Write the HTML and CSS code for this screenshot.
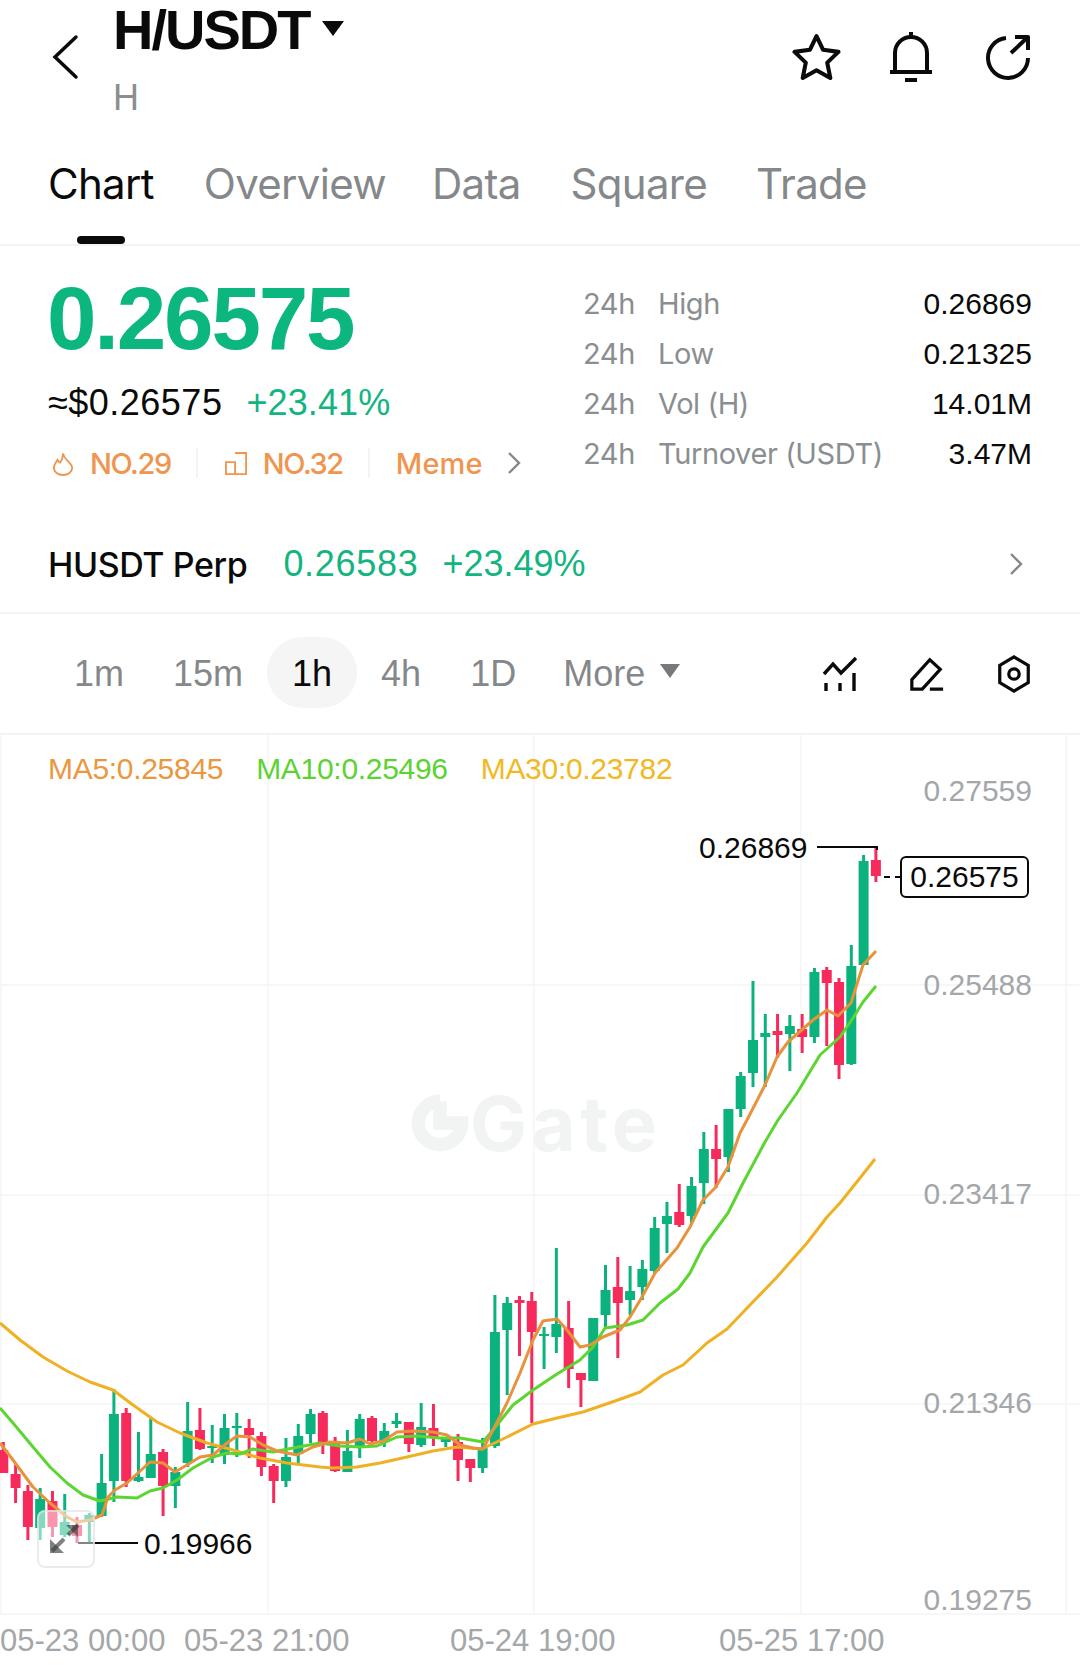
FILE: index.html
```html
<!DOCTYPE html>
<html>
	<head>
		<meta charset="utf-8">
		<title>H/USDT</title>
		<link rel="stylesheet" href="styles.css">
	</head>
	<body>
		<header class="topbar">
			<svg class="back" viewBox="0 0 28 46"><path d="M25 3 L4 23 L25 43"/></svg>
			<div class="pair">
				<h1 class="pair-name">H/USDT<span class="caret"></span></h1>
				<div class="pair-sub">H</div>
			</div>
			<div class="top-icons">
				<svg class="icon star" viewBox="0 0 48 48"><path d="M24 3 L30.5 16.5 L45.5 18.5 L34.5 29 L37.5 44 L24 36.5 L10.5 44 L13.5 29 L2.5 18.5 L17.5 16.5 Z"/></svg>
				<svg class="icon bell" viewBox="0 0 44 52"><path d="M22 1 V6 M6 41 V22 a16 16 0 0 1 32 0 V41 M1 41 H43 M16 49 H28"/></svg>
				<svg class="icon share" viewBox="0 0 46 46"><path d="M21 4 A20 20 0 1 0 43 24 M26 19 L43 3 M30 3 H43 V16"/></svg>
			</div>
		</header>

		<nav class="tabs">
			<a class="tab tab-active">Chart</a>
			<a class="tab tab-overview">Overview</a>
			<a class="tab tab-data">Data</a>
			<a class="tab">Square</a>
			<a class="tab">Trade</a>
		</nav>

		<section class="summary">
			<div class="quote">
				<div class="last-price">0.26575</div>
				<div class="quote-line">
					<span class="fiat">≈$0.26575</span>
					<span class="change">+23.41%</span>
				</div>
				<div class="tags">
					<svg class="tag-icon" viewBox="0 0 24 26"><path d="M12 2 C13 7 15 8 18 11 C21 14 22 16 22 18 A10 7.5 0 0 1 2 18 C2 14 4 12 6 9 C7 11 8 12 9 12 C11 9 12 6 12 2 Z"/></svg>
					<span class="tag">NO.29</span>
					<i class="tag-sep"></i>
					<svg class="tag-icon" viewBox="0 0 24 25"><path d="M1 11 H11 V24 H1 Z M11 1 H23 V24 H11"/></svg>
					<span class="tag">NO.32</span>
					<i class="tag-sep"></i>
					<span class="tag tag-meme">Meme</span>
					<svg class="chev tag-chev" viewBox="0 0 14 24"><path d="M2 2 L12 12 L2 22"/></svg>
				</div>
			</div>
			<div class="stats">
				<div class="stat"><span class="stat-period">24h</span><span class="stat-name">High</span><span class="stat-value">0.26869</span></div>
				<div class="stat"><span class="stat-period">24h</span><span class="stat-name">Low</span><span class="stat-value">0.21325</span></div>
				<div class="stat"><span class="stat-period">24h</span><span class="stat-name">Vol (H)</span><span class="stat-value">14.01M</span></div>
				<div class="stat"><span class="stat-period">24h</span><span class="stat-name">Turnover (USDT)</span><span class="stat-value">3.47M</span></div>
			</div>
		</section>

		<section class="perp">
			<span class="perp-name">HUSDT Perp</span>
			<span class="perp-price">0.26583</span>
			<span class="perp-change">+23.49%</span>
			<svg class="chev perp-chev" viewBox="0 0 14 24"><path d="M2 2 L12 12 L2 22"/></svg>
		</section>

		<section class="toolbar">
			<a class="range">1m</a>
			<a class="range">15m</a>
			<a class="range range-active">1h</a>
			<a class="range">4h</a>
			<a class="range">1D</a>
			<a class="range range-more">More<span class="caret caret-grey"></span></a>
			<div class="tools">
				<svg class="tool" viewBox="0 0 36 36"><path d="M2 18 L11 8 L19 17 L34 2 M4 27 V35 M18 27 V35 M32 17 V35"/></svg>
				<svg class="tool" viewBox="0 0 38 38"><path d="M3 35 V25 L22 4 L33 14 L14 35 Z M22 35 H36"/></svg>
				<svg class="tool" viewBox="0 0 36 40"><path d="M18 2 L33 11 V29 L18 38 L3 29 V11 Z"/><circle cx="18" cy="20" r="5.5"/></svg>
			</div>
		</section>

		<section class="chart">
			<div class="watermark">
				<svg class="watermark-logo" viewBox="0 0 58 56"><path d="M29 7 A21 21 0 1 0 50 28 H29 V7" /></svg>
				<span class="watermark-text">Gate</span>
			</div>
			<svg id="plot" class="plot" viewBox="0 735 1080 930"></svg>

			<div class="legend">
				<span class="ma5">MA5:0.25845</span>
				<span class="ma10">MA10:0.25496</span>
				<span class="ma30">MA30:0.23782</span>
			</div>

			<span class="axis-y y1">0.27559</span>
			<span class="axis-y y2">0.25488</span>
			<span class="axis-y y3">0.23417</span>
			<span class="axis-y y4">0.21346</span>
			<span class="axis-y y5">0.19275</span>

			<span class="mark mark-high">0.26869</span>
			<span class="mark-box">0.26575</span>
			<span class="mark mark-low">0.19966</span>

			<div class="zoom-btn">
				<svg viewBox="0 0 58 58"><path d="M15 41 L27 29 M31 25 L41 15"/><path class="fill" d="M13 43 V29 L27 43 Z M41 15 H29 L41 27 Z"/></svg>
			</div>

			<span class="axis-x x1">05-23 00:00</span>
			<span class="axis-x x2">05-23 21:00</span>
			<span class="axis-x x3">05-24 19:00</span>
			<span class="axis-x x4">05-25 17:00</span>
		</section>
		<script src="chart.js"></script>
	</body>
</html>
```

FILE: styles.css
```css
* {
	box-sizing: border-box;
}
body {
	margin: 0;
	width: 1080px;
	height: 1665px;
	overflow: hidden;
	background: #fff;
	color: #0a0a0a;
	font-family: "Liberation Sans", sans-serif;
}
svg path, svg circle {
	fill: none;
	stroke: currentColor;
}

/* top bar */
.topbar {
	height: 130px;
	display: flex;
	padding-left: 51px;
}
.back {
	width: 28px;
	height: 46px;
	margin-top: 34px;
	stroke-width: 3.5;
	stroke-linecap: round;
}
.pair {
	margin-left: 34px;
}
.pair-name {
	margin: 0;
	font-size: 56px;
	line-height: 60px;
	font-weight: 700;
	letter-spacing: -2px;
}
.caret {
	display: inline-block;
	width: 0;
	height: 0;
	margin-left: 13px;
	vertical-align: 13px;
	border-left: 11px solid transparent;
	border-right: 11px solid transparent;
	border-top: 15px solid #0a0a0a;
}
.caret-grey {
	margin-left: 15px;
	vertical-align: 8px;
	border-left-width: 10px;
	border-right-width: 10px;
	border-top: 14px solid #77797c;
}
.pair-sub {
	margin-top: 20px;
	font-size: 36px;
	line-height: 36px;
	color: #8b8e91;
}
.top-icons {
	margin-left: auto;
	display: flex;
	align-items: center;
	gap: 48px;
	height: 50px;
	margin-top: 32px;
	padding-right: 49px;
}
.icon {
	stroke-width: 4;
	stroke-linejoin: round;
}
.star {
	width: 49px;
	height: 49px;
}
.bell {
	width: 44px;
	height: 52px;
}
.share {
	width: 46px;
	height: 46px;
	margin-left: 4px;
}

/* tabs */
.tabs {
	height: 116px;
	display: flex;
	gap: 49px;
	padding: 29px 0 0 48px;
	border-bottom: 2px solid #f2f3f4;
	font-family: Inter, sans-serif;
	font-size: 42px;
	line-height: 50px;
	letter-spacing: -0.7px;
}
.tab {
	position: relative;
	height: 85px;
	color: #85888b;
}
.tab-active {
	color: #0a0a0a;
	margin-right: 1px;
}
.tab-overview {
	margin-right: -3px;
}
.tab-data {
	margin-right: 1px;
}
.tab-active::after {
	content: "";
	position: absolute;
	left: 29px;
	bottom: 0;
	width: 48px;
	height: 8px;
	border-radius: 4px;
	background: #0a0a0a;
}

/* price summary */
.summary {
	height: 270px;
	display: flex;
	justify-content: space-between;
	padding: 0 48px;
}
.last-price {
	margin-top: 27px;
	margin-left: -1px;
	font-size: 89px;
	line-height: 90px;
	font-weight: 700;
	letter-spacing: -2.2px;
	color: #0bb67f;
}
.quote-line {
	display: flex;
	gap: 24px;
	margin-top: 20px;
	font-size: 36px;
	line-height: 40px;
	letter-spacing: 0.5px;
}
.change {
	color: #14b481;
	letter-spacing: 0.1px;
}
.tags {
	display: flex;
	align-items: center;
	margin-top: 23px;
	height: 34px;
	color: #f0954f;
	font-family: Inter, sans-serif;
	font-size: 29px;
	font-weight: 500;
	letter-spacing: -1.4px;
}
.tag-icon {
	width: 22px;
	height: 25px;
	margin: 0 16px 0 4px;
	stroke-width: 2;
}
.tag-sep {
	width: 2px;
	height: 30px;
	margin: 0 23px 0 25px;
	background: #f2f3f4;
}
.tag-meme {
	margin-left: 3px;
	letter-spacing: 0.1px;
}
.chev {
	width: 14px;
	height: 24px;
	color: #85888b;
	stroke-width: 2.4;
}
.tag-chev {
	margin-left: 24px;
}
.stats {
	width: 449px;
	padding-top: 33px;
}
.stat {
	display: flex;
	height: 50px;
	font-size: 30px;
	line-height: 50px;
}
.stat-period, .stat-name {
	font-family: Inter, sans-serif;
	font-size: 29px;
	color: #8b8e91;
	letter-spacing: -0.4px;
}
.stat-period {
	width: 75px;
}
.stat-value {
	margin-left: auto;
}

/* perp row */
.perp {
	height: 98px;
	display: flex;
	align-items: center;
	padding: 0 57px 0 48px;
	border-bottom: 2px solid #f2f3f4;
	font-size: 36px;
	letter-spacing: 0.7px;
}
.perp-name {
	font-family: Inter, sans-serif;
	font-size: 34px;
	font-weight: 500;
	letter-spacing: -0.4px;
}
.perp-price {
	margin-left: 36px;
	color: #14b481;
}
.perp-change {
	margin-left: 24px;
	color: #14b481;
	letter-spacing: 0;
}
.perp-chev {
	margin-left: auto;
}

/* interval toolbar */
.toolbar {
	height: 121px;
	display: flex;
	align-items: center;
	border-bottom: 2px solid #f2f3f4;
	padding-left: 74px;
	font-size: 36px;
}
.range {
	color: #85888b;
	margin-right: 49px;
	line-height: 70px;
}
.range-active {
	position: relative;
	color: #0a0a0a;
	font-weight: 500;
}
.range-active::before {
	content: "";
	position: absolute;
	z-index: -1;
	left: -25px;
	right: -25px;
	top: -2px;
	height: 71px;
	border-radius: 36px;
	background: #f5f5f5;
}
.range-more {
	margin-left: -2px;
}
.tools {
	margin-left: auto;
	display: flex;
	align-items: center;
	gap: 51px;
	padding-right: 48px;
}
.tool {
	width: 36px;
	height: 38px;
	stroke-width: 3.4;
	color: #0a0a0a;
}

/* chart */
.chart {
	position: relative;
	height: 930px;
}
.plot {
	position: absolute;
	left: 0;
	top: 0;
	width: 1080px;
	height: 930px;
}
.watermark {
	position: absolute;
	left: 410px;
	top: 359px;
	display: flex;
	align-items: center;
	gap: 0;
	color: #f2f4f4;
}
.watermark-logo {
	width: 60px;
	height: 58px;
	stroke-width: 13;
}
.watermark-text {
	font-family: Inter, sans-serif;
	font-size: 76px;
	line-height: 58px;
	font-weight: 700;
	letter-spacing: 4.5px;
}
.legend {
	position: relative;
	display: flex;
	gap: 33px;
	padding: 17px 0 0 48px;
	font-size: 30px;
	line-height: 34px;
	letter-spacing: -0.3px;
}
.ma5 {
	color: #ea9740;
}
.ma10 {
	color: #5dd233;
}
.ma30 {
	color: #f2b824;
}
.axis-y, .axis-x {
	position: absolute;
	font-size: 30px;
	line-height: 34px;
	color: #a4a7aa;
}
.axis-y {
	right: 48px;
}
.y1 {
	top: 39px;
}
.y2 {
	top: 233px;
}
.y3 {
	top: 442px;
}
.y4 {
	top: 651px;
}
.y5 {
	top: 848px;
}
.axis-x {
	top: 889px;
	font-size: 31px;
}
.x1 {
	left: 0;
}
.x2 {
	left: 184px;
}
.x3 {
	left: 450px;
}
.x4 {
	left: 719px;
}
.mark {
	position: absolute;
	font-size: 30px;
	line-height: 34px;
	color: #0a0a0a;
}
.mark-high {
	left: 699px;
	top: 96px;
}
.mark-low {
	left: 144px;
	top: 792px;
}
.mark-box {
	position: absolute;
	left: 900px;
	top: 121px;
	width: 129px;
	height: 42px;
	border: 2px solid #0a0a0a;
	border-radius: 6px;
	background: #fff;
	font-size: 30px;
	line-height: 38px;
	text-align: center;
}
.zoom-btn {
	position: absolute;
	left: 37px;
	top: 775px;
	width: 58px;
	height: 58px;
	border: 2px solid rgba(225, 227, 228, 0.7);
	border-radius: 8px;
	background: rgba(255, 255, 255, 0.5);
	color: rgba(60, 60, 60, 0.65);
	stroke-width: 4;
}
.zoom-btn svg {
	display: block;
	margin: -2px;
	width: 58px;
	height: 58px;
}
.zoom-btn .fill {
	fill: rgba(60, 60, 60, 0.65);
	stroke: none;
}
```

FILE: chart.js
```js
var svg_ns = 'http://www.w3.org/2000/svg';
var plot = document.getElementById('plot');
var up = '#0bb27d';
var down = '#f72a5c';

// colour, wick top, body top, body bottom, wick bottom (page y)
var candles = [
	[down, 1442, 1450, 1473, 1473], [down, 1465, 1474, 1488, 1503], [down, 1485, 1491, 1527, 1540],
	[up, 1488, 1499, 1528, 1540], [down, 1491, 1501, 1527, 1537], [up, 1494, 1522, 1535, 1537],
	[down, 1517, 1525, 1536, 1543], [up, 1513, 1515, 1522, 1543], [up, 1454, 1483, 1516, 1517],
	[up, 1389, 1414, 1481, 1502], [down, 1408, 1413, 1481, 1487], [up, 1432, 1477, 1481, 1482],
	[up, 1417, 1454, 1478, 1478], [down, 1449, 1452, 1486, 1516], [up, 1467, 1472, 1486, 1508],
	[up, 1402, 1431, 1463, 1467], [down, 1408, 1430, 1449, 1450], [up, 1425, 1446, 1448, 1463],
	[up, 1414, 1428, 1455, 1464], [up, 1413, 1426, 1428, 1457], [down, 1419, 1428, 1435, 1458],
	[down, 1432, 1436, 1467, 1476], [down, 1464, 1466, 1481, 1503], [up, 1438, 1457, 1481, 1487],
	[up, 1424, 1436, 1454, 1463], [up, 1409, 1414, 1434, 1443], [down, 1411, 1413, 1442, 1454],
	[down, 1437, 1442, 1471, 1472], [up, 1430, 1451, 1472, 1472], [up, 1414, 1419, 1447, 1458],
	[down, 1416, 1418, 1441, 1443], [up, 1423, 1431, 1441, 1447], [up, 1413, 1421, 1424, 1428],
	[down, 1422, 1422, 1444, 1452], [up, 1403, 1427, 1445, 1447], [down, 1404, 1428, 1437, 1446],
	[up, 1437, 1439, 1442, 1447], [down, 1434, 1442, 1460, 1481], [down, 1459, 1459, 1468, 1482],
	[up, 1438, 1447, 1468, 1473], [up, 1295, 1332, 1446, 1448], [up, 1297, 1303, 1330, 1395],
	[down, 1296, 1300, 1303, 1356], [down, 1292, 1301, 1332, 1423], [up, 1327, 1334, 1336, 1369],
	[up, 1248, 1324, 1337, 1353], [down, 1301, 1328, 1369, 1388], [down, 1373, 1373, 1380, 1407],
	[up, 1318, 1318, 1381, 1381], [up, 1265, 1290, 1315, 1327], [down, 1257, 1287, 1303, 1358],
	[up, 1266, 1291, 1300, 1315], [up, 1260, 1269, 1287, 1300], [up, 1217, 1228, 1271, 1273],
	[up, 1202, 1216, 1224, 1253], [down, 1184, 1212, 1225, 1227], [up, 1177, 1186, 1216, 1223],
	[up, 1132, 1149, 1183, 1204], [down, 1125, 1149, 1159, 1188], [up, 1109, 1109, 1157, 1172],
	[up, 1072, 1076, 1109, 1117], [up, 981, 1040, 1073, 1087], [up, 1014, 1033, 1037, 1087],
	[down, 1014, 1031, 1035, 1058], [up, 1015, 1026, 1034, 1071], [down, 1014, 1029, 1037, 1053],
	[up, 968, 972, 1037, 1043], [down, 967, 970, 983, 1046], [down, 978, 982, 1065, 1079],
	[up, 945, 966, 1064, 1065], [up, 855, 861, 965, 965], [down, 847, 860, 876, 882]
];

var ma5 = '0,1443 13,1460 33,1487 50,1503 67,1517 77,1522 90,1520 102,1515 108,1497 115,1490 127,1483 138,1473 150,1462 163,1463 175,1472 187,1465 200,1457 213,1455 227,1443 237,1436 250,1437 263,1445 277,1451 297,1455 313,1447 330,1442 347,1443 360,1439 370,1444 383,1441 397,1432 413,1431 433,1432 447,1435 460,1445 473,1448 483,1449 493,1430 507,1403 520,1373 533,1340 543,1321 557,1319 567,1330 580,1347 590,1345 603,1337 620,1330 630,1317 642,1297 655,1273 677,1248 690,1227 703,1200 715,1188 728,1167 740,1133 747,1120 765,1085 777,1057 788,1042 813,1020 827,1010 838,1016 851,1003 863,965 876,951';
var ma10 = '0,1408 13,1423 33,1447 50,1467 67,1483 83,1495 100,1501 117,1497 137,1498 150,1491 163,1488 177,1480 193,1468 213,1457 227,1453 240,1454 253,1449 273,1452 293,1448 320,1443 340,1446 360,1447 377,1446 397,1437 417,1436 440,1438 460,1438 483,1442 497,1425 513,1405 533,1390 557,1374 580,1360 593,1347 605,1328 627,1325 643,1320 660,1303 678,1289 690,1273 703,1247 728,1213 743,1183 765,1142 778,1120 797,1093 820,1055 840,1037 853,1018 863,1002 876,986';
var ma30 = '0,1323 20,1340 43,1357 67,1371 90,1382 113,1390 133,1405 157,1422 180,1433 207,1443 233,1450 260,1458 287,1463 320,1467 333,1468 357,1467 380,1463 407,1457 433,1451 457,1447 482,1449 507,1437 533,1424 557,1418 583,1412 618,1400 640,1392 663,1375 683,1365 707,1343 727,1329 750,1305 777,1277 807,1243 827,1217 840,1203 860,1178 875,1159';

add_line = function(x1, y1, x2, y2, color, width) {
	var el = document.createElementNS(svg_ns, 'line');
	el.setAttribute('x1', x1);
	el.setAttribute('y1', y1);
	el.setAttribute('x2', x2);
	el.setAttribute('y2', y2);
	el.setAttribute('stroke', color);
	el.setAttribute('stroke-width', width);
	plot.appendChild(el);
	return el;
};

add_ma = function(points, color) {
	var el = document.createElementNS(svg_ns, 'polyline');
	el.setAttribute('points', points);
	el.setAttribute('fill', 'none');
	el.setAttribute('stroke', color);
	el.setAttribute('stroke-width', 3);
	el.setAttribute('stroke-linejoin', 'round');
	plot.appendChild(el);
};

// grid
var grid = '#f4f5f6';
[1, 268, 534, 801, 1066].forEach(function(x) {
	add_line(x, 735, x, 1614, grid, 1.5);
});
[985, 1195, 1404, 1614].forEach(function(y) {
	add_line(0, y, 1080, y, grid, 1.5);
});

for (var i = 0; i < candles.length; i++) {
	var c = candles[i];
	var x = 3.3 + i * 12.29;
	add_line(x, c[1], x, c[4], c[0], 3);
	add_line(x, c[2], x, c[3], c[0], 10);
}

add_ma(ma30, '#f0b023');
add_ma(ma10, '#5cd531');
add_ma(ma5, '#e8923c');

// high, last and low price leaders
add_line(817, 847, 877, 847, '#0a0a0a', 2);
add_line(877, 846, 877, 850, '#0a0a0a', 2);
add_line(884, 877, 890, 877, '#0a0a0a', 2);
add_line(895, 877, 900, 877, '#0a0a0a', 2);
add_line(78, 1543, 138, 1543, '#0a0a0a', 2);
```
